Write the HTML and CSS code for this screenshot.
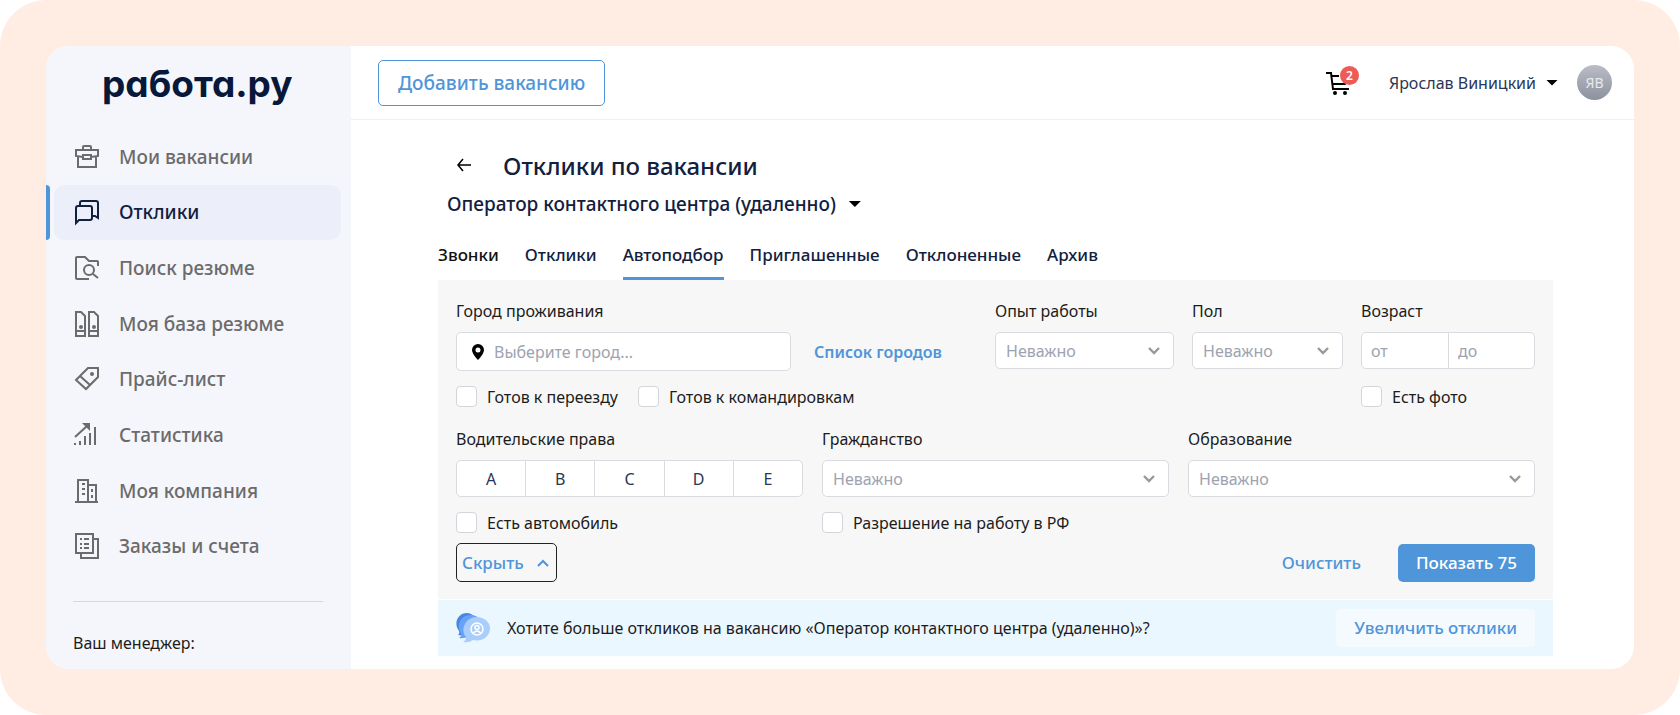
FILE: index.html
```html
<!DOCTYPE html>
<html lang="ru">
<head>
<meta charset="utf-8">
<title>Отклики по вакансии</title>
<link rel="stylesheet" href="styles.css">
</head>
<body>
<div class="frame">
  <div class="app">
    <aside class="sidebar">
      <div class="logo">работа.ру</div>
      <nav class="menu">
        <a class="menu-item" href="#"><svg class="menu-icon" viewBox="0 0 24 24"><path d="M8 5V2q0-1 1-1h6q1 0 1 1v3M8 12l-7-1V5h22v6l-7 1M3 12v10h18V12M8 10h8v4H8z"/></svg>Мои вакансии</a>
        <a class="menu-item active" href="#"><svg class="menu-icon" viewBox="0 0 24 24"><path d="M1 23V8q0-2 2-2h12q2 0 2 2v10q0 2-2 2H4zM5 6V3q0-2 2-2h14q2 0 2 2v15l-3-2h-3"/></svg>Отклики</a>
        <a class="menu-item" href="#"><svg class="menu-icon" viewBox="0 0 24 24"><path d="M14 23H2q-1 0-1-1V2q0-1 1-1h8l4 4h8q1 0 1 1v4M18 18l5 4"/><circle cx="14" cy="14" r="5"/></svg>Поиск резюме</a>
        <a class="menu-item" href="#"><svg class="menu-icon" viewBox="0 0 24 26"><path d="M1 1h5l4 4v20H1zM14 1h5l4 4v20h-9zM1 20h9M14 20h9"/><circle class="solid" cx="6" cy="16" r="2"/><circle class="solid" cx="19" cy="16" r="2"/></svg>Моя база резюме</a>
        <a class="menu-item" href="#"><svg class="menu-icon" viewBox="0 0 24 24"><path d="M13 1h10v9L11 22 1 13zM5 9l10 9"/><circle class="solid" cx="17" cy="7" r="2"/></svg>Прайс-лист</a>
        <a class="menu-item" href="#"><svg class="menu-icon" viewBox="0 0 24 24"><path d="M0 14 12 3M5 22v-4M10 22v-9M15 22V10M20 22V4M-1 21h2"/><path class="solid" d="M7 0h8v8z"/></svg>Статистика</a>
        <a class="menu-item" href="#"><svg class="menu-icon" viewBox="0 0 24 24"><path d="M0 23h23M3 23V1h10v22M13 6h8v17"/><path class="solid" d="M7 4h3v2H7zM7 9h3v2H7zM7 14h3v2H7zM16 10h2v3h-2zM16 16h2v3h-2z"/></svg>Моя компания</a>
        <a class="menu-item" href="#"><svg class="menu-icon" viewBox="0 0 24 26"><path d="M1 1h17v19H1zM18 6h5v19H6v-5"/><path d="M5 6h2M9 6h5M5 11h2M9 11h5M5 15h2M9 15h5"/></svg>Заказы и счета</a>
      </nav>
      <div class="manager">
        <p>Ваш менеджер:</p>
        <p class="manager-name">Григорьев Дмитрий</p>
      </div>
    </aside>
    <div class="content">
      <header class="topbar">
        <button class="btn-outline" type="button">Добавить вакансию</button>
        <div class="account">
          <a class="cart" href="#" aria-label="Корзина"><svg viewBox="0 0 24 24"><path d="M0 2h5l2 16h16M6 5h7M7 13h12l4-5"/><circle cx="9" cy="22" r="2"/><circle cx="19" cy="22" r="2"/></svg><span class="badge">2</span></a>
          <button class="user" type="button">Ярослав Виницкий<span class="caret"></span></button>
          <span class="avatar">ЯВ</span>
        </div>
      </header>
      <main class="page">
        <div class="heading">
          <a class="back" href="#" aria-label="Назад"><svg viewBox="0 0 14 14"><path d="M14 7H1M6 1 1 7l5 6"/></svg></a>
          <h1>Отклики по вакансии</h1>
        </div>
        <button class="vacancy" type="button">Оператор контактного центра (удаленно)<span class="caret"></span></button>
        <nav class="tabs">
          <a class="dark" href="#">Звонки</a>
          <a href="#">Отклики</a>
          <a class="current" href="#">Автоподбор</a>
          <a href="#">Приглашенные</a>
          <a href="#">Отклоненные</a>
          <a href="#">Архив</a>
        </nav>
        <form class="filters">
          <div class="row-top">
            <div class="field city">
              <label for="city">Город проживания</label>
              <div class="city-line">
                <div class="city-box"><svg class="pin" viewBox="0 0 12 16"><path fill-rule="evenodd" d="M6 0a6 6 0 0 0-6 6c0 4 6 10 6 10s6-6 6-10a6 6 0 0 0-6-6zm0 3.500a2.500 2.500 0 1 1 0 5 2.500 2.500 0 0 1 0-5z"/></svg><input id="city" type="text" placeholder="Выберите город..."></div>
                <a class="link" href="#">Список городов</a>
              </div>
              <div class="checks">
                <label class="check"><input type="checkbox">Готов к переезду</label>
                <label class="check"><input type="checkbox">Готов к командировкам</label>
              </div>
            </div>
            <div class="field exp">
              <label for="exp">Опыт работы</label>
              <select id="exp"><option>Неважно</option></select>
            </div>
            <div class="field sex">
              <label for="sex">Пол</label>
              <select id="sex"><option>Неважно</option></select>
            </div>
            <div class="field age">
              <label for="age-from">Возраст</label>
              <div class="range"><input id="age-from" type="text" placeholder="от"><input type="text" placeholder="до" aria-label="Возраст до"></div>
              <label class="check"><input type="checkbox">Есть фото</label>
            </div>
          </div>
          <div class="row-bottom">
            <div class="field">
              <span class="label">Водительские права</span>
              <div class="segments"><button type="button">A</button><button type="button">B</button><button type="button">C</button><button type="button">D</button><button type="button">E</button></div>
              <label class="check"><input type="checkbox">Есть автомобиль</label>
            </div>
            <div class="field">
              <label for="citizen">Гражданство</label>
              <select id="citizen"><option>Неважно</option></select>
              <label class="check"><input type="checkbox">Разрешение на работу в РФ</label>
            </div>
            <div class="field">
              <label for="edu">Образование</label>
              <select id="edu"><option>Неважно</option></select>
            </div>
          </div>
          <div class="actions">
            <button class="collapse" type="button">Скрыть<svg viewBox="0 0 12 8"><path d="m1 7 5-5 5 5"/></svg></button>
            <button class="clear" type="button">Очистить</button>
            <button class="btn-primary" type="submit">Показать 75</button>
          </div>
        </form>
        <section class="banner">
          <svg class="bubbles" viewBox="0 0 34 30"><path fill="#4a86dc" d="M11 0C2 0-3 10 3 18q1 3-1 4 4 1 7-1h10V4Q15 0 11 0z"/><path fill="#66a3f8" d="M15 2C4 2 0 13 5 20q1 3-2 5 6 1 9-2l12-3V6Q20 2 15 2z"/><path fill="#a9cefb" d="M21 4C9 4 4 17 10 24q0 4-3 5 6 1 10-2c9 2 17-3 17-12C34 9 28 4 21 4z"/><g fill="none" stroke="#fff" stroke-width="1.500"><circle cx="21" cy="16" r="6"/><circle cx="21" cy="14.500" r="2"/><path d="M17.500 20q3.500-4 7 0"/></g></svg>
          <p>Хотите больше откликов на вакансию «Оператор контактного центра (удаленно)»?</p>
          <button class="btn-soft" type="button">Увеличить отклики</button>
        </section>
      </main>
    </div>
  </div>
</div>
</body>
</html>
```
FILE: styles.css
```css
* { box-sizing: border-box; }
body {
  margin: 0;
  background: #fff;
  color: #1c1c1c;
  font-family: "Noto Sans", "Open Sans", sans-serif;
  font-size: 16px;
  line-height: 24px;
}
h1, p { margin: 0; }
a { color: inherit; text-decoration: none; }
button, input, select { font: inherit; color: inherit; margin: 0; }
button { padding: 0; border: 0; background: none; cursor: pointer; }

.frame { height: 100vh; padding: 46px; border-radius: 46px; background: #ffede4; }
.app { display: flex; height: 100%; overflow: hidden; border-radius: 23px; background: #fff; }

.sidebar { flex: 0 0 305px; background: #f5f6fb; }
.logo {
  height: 83px;
  padding: 14px 0 0 56px;
  color: #08183a;
  font: 700 37px/48px Inter, "Noto Sans", sans-serif;
  font-feature-settings: "cv11";
}
.menu { display: flex; flex-direction: column; height: 445px; padding: 0 10px 0 0; }
.menu-item {
  display: flex;
  flex: 1;
  align-items: center;
  gap: 20px;
  padding-left: 29px;
  color: #6b6b6b;
  font-size: 19px;
  font-weight: 500;
}
.menu-item.active {
  position: relative;
  margin-left: 8px;
  padding-left: 21px;
  border-radius: 10px;
  background: #eceffa;
  color: #12203f;
}
.menu-item.active::before {
  position: absolute;
  top: 0;
  bottom: 0;
  left: -8px;
  width: 4px;
  border-radius: 0 4px 4px 0;
  background: #4f95d9;
  content: "";
}
.menu-icon { width: 24px; height: 26px; fill: none; stroke: currentColor; stroke-width: 2; overflow: visible; }
.solid { fill: currentColor; stroke: none; }
.manager { margin: 27px 28px 0 27px; padding-top: 29px; border-top: 1px solid #d4d7de; }
.manager-name { margin-top: 8px; }

.content { flex: 1; min-width: 0; }
.topbar {
  display: flex;
  align-items: center;
  justify-content: space-between;
  height: 74px;
  padding: 0 22px 0 27px;
  border-bottom: 1px solid #eef0f5;
}
.btn-outline {
  height: 46px;
  padding: 0 19px;
  border: 1px solid #4f95d9;
  border-radius: 5px;
  color: #4f95d9;
  font-size: 19px;
  font-weight: 500;
}
.account { display: flex; align-items: center; }
.cart { position: relative; width: 24px; height: 24px; margin-right: 39px; }
.cart svg { display: block; width: 24px; height: 24px; fill: none; stroke: #000; stroke-width: 2; }
.cart circle { fill: #000; stroke: none; }
.badge {
  position: absolute;
  top: -5px;
  left: 14px;
  width: 19px;
  height: 19px;
  border-radius: 50%;
  background: #ee5a55;
  color: #fff;
  font-size: 12px;
  font-weight: 600;
  line-height: 19px;
  text-align: center;
}
.user { display: flex; align-items: center; gap: 10px; margin-right: 19px; color: #2a3654; }
.caret { width: 12px; height: 6px; background: #000; clip-path: polygon(0 0, 100% 0, 50% 100%); }
.avatar {
  width: 35px;
  height: 35px;
  border-radius: 50%;
  background: linear-gradient(#babdc6, #8c919e);
  color: #e8e9ed;
  font-size: 14px;
  line-height: 35px;
  text-align: center;
}

.page { padding: 0 81px 0 87px; }
.heading { display: flex; align-items: center; gap: 32px; padding: 30px 0 0 19px; color: #12203f; }
.back { padding-bottom: 3px; }
.back svg { display: block; width: 14px; height: 14px; fill: none; stroke: #000; stroke-width: 1.500; }
h1 { font-size: 24px; font-weight: 500; line-height: 32px; }
.vacancy { display: flex; align-items: center; gap: 13px; margin: 10px 0 0 9px; color: #12203f; font-size: 19px; font-weight: 500; line-height: 24px; }
.tabs { display: flex; gap: 26px; margin-top: 27px; color: #12203f; font-size: 17px; font-weight: 500; }
.tabs a { height: 37px; border-bottom: 3px solid transparent; }
.tabs .dark { color: #111; }
.tabs .current { border-color: #4f95d9; }

.filters { padding: 19px 18px 17px; background: #f7f7f7; }
.row-top { display: flex; gap: 18px; }
.row-bottom { display: grid; grid-template-columns: repeat(3, 1fr); gap: 19px; margin-top: 20px; }
.field > label:first-child, .label { display: block; margin-bottom: 9px; line-height: 24px; }
.city { flex: 1; }
.exp { width: 179px; }
.sex { width: 151px; }
.age { width: 174px; }
.city-line { display: flex; align-items: center; gap: 23px; }
.city-box {
  display: flex;
  flex: 0 1 335px;
  align-items: center;
  gap: 10px;
  height: 39px;
  padding: 0 15px;
  border: 1px solid #d9dbe0;
  border-radius: 5px;
  background: #fff;
}
.pin { width: 12px; height: 16px; }
.city-box input { flex: 1; min-width: 0; padding: 0; border: 0; outline: 0; background: none; }
::placeholder { color: #9da3b0; opacity: 1; }
.link { color: #4f95d9; font-weight: 600; }
select {
  display: block;
  width: 100%;
  height: 37px;
  padding: 0 10px;
  border: 1px solid #d9dbe0;
  border-radius: 5px;
  appearance: none;
  background: #fff url("data:image/svg+xml,%3Csvg xmlns='http://www.w3.org/2000/svg' viewBox='0 0 12 8'%3E%3Cpath d='m1 1 5 5 5-5' fill='none' stroke='%23999' stroke-width='2.400'/%3E%3C/svg%3E") no-repeat right 13px center / 12px 8px;
  color: #9da3b0;
}
.range, .segments { display: flex; height: 37px; border: 1px solid #d9dbe0; border-radius: 5px; background: #fff; }
.range input { width: 50%; padding: 0 9px; border: 0; outline: 0; background: none; }
.segments button { flex: 1; color: #2a3654; }
.range input + input, .segments button + button { border-left: 1px solid #d9dbe0; }
.checks { display: flex; gap: 20px; }
.check { display: flex; align-items: center; gap: 10px; height: 21px; margin-top: 15px; }
.age .check { margin-top: 17px; }
.check input {
  width: 21px;
  height: 21px;
  border: 1px solid #d3d5da;
  border-radius: 4px;
  appearance: none;
  background: #fff;
}
.actions { display: flex; align-items: center; margin-top: 10px; font-size: 17px; }
.collapse {
  display: flex;
  align-items: center;
  gap: 13px;
  height: 39px;
  margin-right: auto;
  padding: 0 7px 0 5px;
  border: 1px solid #222;
  border-radius: 5px;
  color: #4f95d9;
  font-weight: 500;
}
.collapse svg { width: 12px; height: 8px; fill: none; stroke: currentColor; stroke-width: 2; }
.clear { margin-right: 37px; color: #4f95d9; font-weight: 500; }
.btn-primary, .btn-soft { height: 38px; padding: 0 18px; border-radius: 5px; font-size: 17px; font-weight: 500; }
.btn-primary { background: #4f95d9; color: #fff; }
.banner { display: flex; align-items: center; gap: 17px; height: 56px; margin-top: 1px; padding: 0 18px; background: #ebf7ff; }
.bubbles { width: 34px; height: 30px; }
.banner p { flex: 1; }
.btn-soft { background: #f5fafe; color: #4f95d9; }
```
